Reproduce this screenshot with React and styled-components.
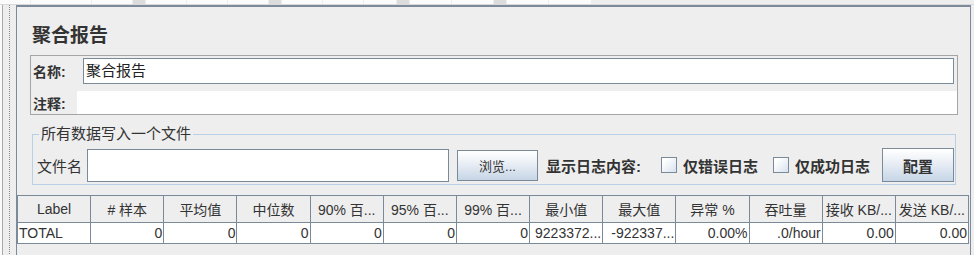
import React from 'react';
import styled, { createGlobalStyle } from 'styled-components';

const GlobalStyle = createGlobalStyle`
  html, body { margin: 0; padding: 0; background: #eeeeee; }
  body {
    font-family: "Liberation Sans", "Noto Sans CJK SC", sans-serif;
    color: #333333;
  }
  * { box-sizing: border-box; }
`;

const Root = styled.div`
  width: 974px;
  height: 255px;
  overflow: hidden;
  display: flex;
  flex-direction: column;
  background: #eeeeee;
`;

const TopStrip = styled.div`
  height: 5px;
  display: flex;
  align-items: flex-start;
  background: #eeeeee;
  border-bottom: 1px solid #d9d9d9;
`;

const TopCell = styled.div`
  width: ${p => p.$w}px;
  height: 4px;
  margin-left: ${p => p.$gap ?? 1}px;
  background: ${p => (p.$dark ? '#dcdcdc' : '#fbfbfb')};
`;

const Main = styled.div`
  flex: 1;
  display: flex;
  min-height: 0;
`;

const Gutter = styled.div`
  width: 16px;
  flex-shrink: 0;
  background:
    linear-gradient(to bottom, #8a8a8a 50%, transparent 50%) 9px 0 / 1px 2px repeat-y,
    linear-gradient(#a9a9a9, #a9a9a9) 2px 0 / 1px 100% no-repeat,
    linear-gradient(#fafafa, #fafafa) 0 0 / 2px 100% no-repeat,
    #eeeeee;
`;

const Panel = styled.div`
  width: 955px;
  flex-shrink: 0;
  border-top: 2px solid #7d8a9a;
  border-left: 1px solid #7d8a9a;
  border-right: 1px solid #7d8a9a;
  display: flex;
  flex-direction: column;
`;

const Title = styled.div`
  margin: 15px 0 0 15px;
  height: 24px;
  line-height: 24px;
  font-size: 19px;
  font-weight: 700;
  font-family: "Noto Sans CJK SC", sans-serif;
  color: #333;
`;

const NameBox = styled.div`
  margin: 9px 12px 0 13px;
  border: 1px solid #a5a5a5;
  padding: 2px 0 0 2px;
  display: flex;
  flex-direction: column;
`;

const FieldRow = styled.div`
  display: flex;
  align-items: center;
  height: ${p => p.$h}px;
  margin-top: ${p => p.$mt || 0}px;
  margin-right: ${p => p.$mr || 0}px;
`;

const FieldLabel = styled.div`
  width: ${p => p.$w}px;
  flex-shrink: 0;
  font-size: ${p => p.$fs || 14}px;
  font-weight: ${p => (p.$bold ? 700 : 400)};
  color: #333;
`;

const TextField = styled.div`
  flex: ${p => (p.$w ? '0 0 auto' : 1)};
  width: ${p => (p.$w ? `${p.$w}px` : 'auto')};
  height: ${p => (p.$h ? `${p.$h}px` : '100%')};
  background: #ffffff;
  border: ${p => (p.$plain ? 'none' : '1px solid #7a8a99')};
  font-size: 15px;
  line-height: 24px;
  padding-left: 2px;
  color: #222;
`;

const Group = styled.fieldset`
  margin: 10px 14px 0 15px;
  border: 1px solid #b8cfe5;
  padding: 5px 4px 2px 4px;
  min-width: 0;
`;

const Legend = styled.legend`
  padding: 0 2px;
  margin-left: 2px;
  font-size: 15px;
  line-height: 18px;
  color: #333;
`;

const GroupRow = styled.div`
  display: flex;
  align-items: center;
  height: 34px;
`;

const Button = styled.button`
  flex-shrink: 0;
  width: ${p => p.$w}px;
  height: ${p => p.$h}px;
  margin-left: ${p => p.$ml}px;
  border: 1px solid #7a8a99;
  border-radius: 0;
  background: linear-gradient(to bottom, #ffffff 0%, #eef2f7 35%, #c6d5e6 100%);
  font-family: "Liberation Sans", "Noto Sans CJK SC", sans-serif;
  font-size: ${p => (p.$bold ? 15 : 13)}px;
  font-weight: ${p => (p.$bold ? 700 : 400)};
  color: #333;
  padding: 0;
`;

const BoldText = styled.span`
  flex-shrink: 0;
  margin-left: ${p => p.$ml || 0}px;
  font-size: 15px;
  font-weight: 700;
  color: #333;
  white-space: nowrap;
`;

const Check = styled.span`
  flex-shrink: 0;
  width: 16px;
  height: 16px;
  margin-left: ${p => p.$ml}px;
  border: 1px solid #7a8a99;
  background: linear-gradient(to bottom right, #ffffff 20%, #d8e2ee 100%);
`;

const Table = styled.div`
  margin-top: 10px;
  width: 952px;
  display: grid;
  grid-template-columns: repeat(13, 1fr);
  border-left: 1px solid #7a8a99;
`;

const HeadCell = styled.div`
  height: 28px;
  border-top: 1px solid #7a8a99;
  border-bottom: 1px solid #7a8a99;
  border-right: 1px solid #7a8a99;
  background: #eeeeee;
  display: flex;
  align-items: center;
  justify-content: center;
  font-size: 14px;
  color: #333;
  white-space: nowrap;
  overflow: hidden;
`;

const DataCell = styled.div`
  height: 21px;
  border-right: 1px solid #7a8a99;
  border-bottom: 1px solid #7a8a99;
  background: #ffffff;
  display: flex;
  align-items: center;
  justify-content: ${p => (p.$left ? 'flex-start' : 'flex-end')};
  padding: 0 1px;
  font-size: 14px;
  color: #333;
  white-space: nowrap;
  overflow: hidden;
`;

const headers = [
  'Label', '# 样本', '平均值', '中位数', '90% 百...', '95% 百...', '99% 百...',
  '最小值', '最大值', '异常 %', '吞吐量', '接收 KB/...', '发送 KB/...',
];

const row = [
  'TOTAL', '0', '0', '0', '0', '0', '0', '9223372...', '-922337...',
  '0.00%', '.0/hour', '0.00', '0.00',
];

const topCells = [
  { w: 30, gap: 0 }, { w: 60 }, { w: 40 }, { w: 12, dark: true }, { w: 40 },
  { w: 40 }, { w: 40 }, { w: 12, dark: true }, { w: 40 }, { w: 40 },
  { w: 32 }, { w: 12, dark: true }, { w: 41 }, { w: 41 }, { w: 12, dark: true },
  { w: 41 }, { w: 42 },
];

export default function App() {
  return (
    <Root>
      <GlobalStyle />
      <TopStrip>
        {topCells.map((c, i) => (
          <TopCell key={i} $w={c.w} $gap={c.gap} $dark={c.dark} />
        ))}
      </TopStrip>
      <Main>
        <Gutter />
        <Panel>
          <Title>聚合报告</Title>
          <NameBox>
            <FieldRow $h={26} $mr={3}>
              <FieldLabel $w={50} $bold>名称:</FieldLabel>
              <TextField>聚合报告</TextField>
            </FieldRow>
            <FieldRow $h={23} $mt={7}>
              <FieldLabel $w={44} $bold>注释:</FieldLabel>
              <TextField $plain />
            </FieldRow>
          </NameBox>
          <Group>
            <Legend>所有数据写入一个文件</Legend>
            <GroupRow>
              <FieldLabel $w={50} $fs={15}>文件名</FieldLabel>
              <TextField $w={362} $h={33} />
              <Button $w={81} $h={31} $ml={8}>浏览...</Button>
              <BoldText $ml={8}>显示日志内容:</BoldText>
              <Check $ml={20} />
              <BoldText $ml={6}>仅错误日志</BoldText>
              <Check $ml={15} />
              <BoldText $ml={6}>仅成功日志</BoldText>
              <Button $w={72} $h={34} $ml={12} $bold>配置</Button>
            </GroupRow>
          </Group>
          <Table>
            {headers.map((h, i) => (
              <HeadCell key={i}>{h}</HeadCell>
            ))}
            {row.map((v, i) => (
              <DataCell key={i} $left={i === 0}>{v}</DataCell>
            ))}
          </Table>
        </Panel>
      </Main>
    </Root>
  );
}
